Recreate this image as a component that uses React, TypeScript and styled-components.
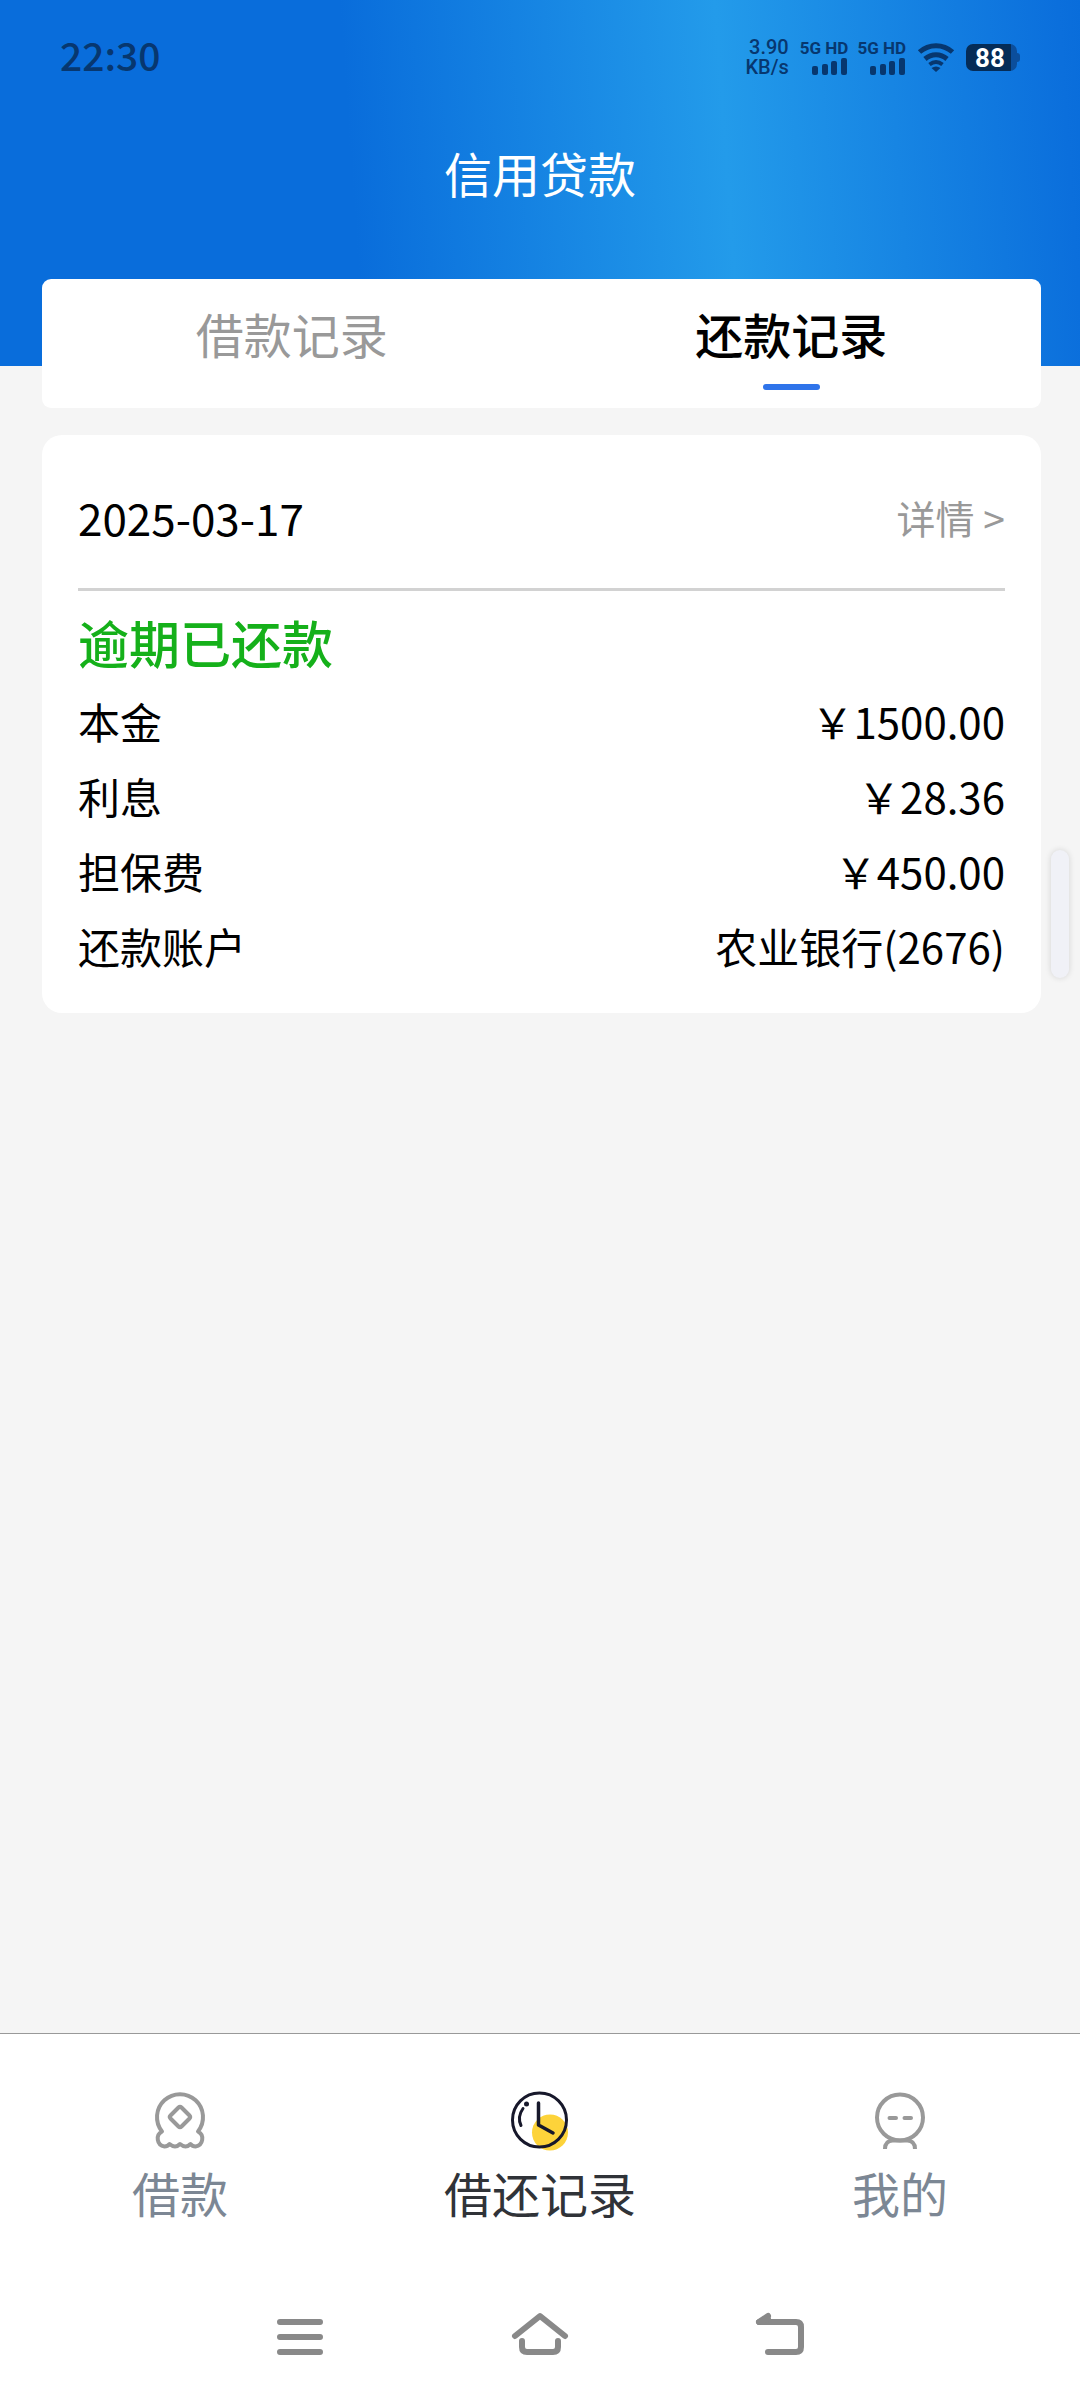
import React, { useState } from "react";
import styled, { createGlobalStyle } from "styled-components";

const GlobalStyle = createGlobalStyle`
  *, *::before, *::after { box-sizing: border-box; }
  body {
    margin: 0;
    background: #f5f5f5;
    color: #000;
    font-family: "Noto Sans CJK SC", "Noto Sans", sans-serif;
  }
  button {
    margin: 0;
    padding: 0;
    border: 0;
    background: none;
    color: inherit;
    font: inherit;
    cursor: pointer;
  }
  svg { display: block; }
`;

const Page = styled.div`
  min-height: 100vh;
  display: flex;
  flex-direction: column;
`;

const Header = styled.header`
  padding-bottom: 136px;
  background: linear-gradient(86deg, #096ddb 0%, #096ddb 33%, #239bea 67%, #0b6fdc 98%, #096ddb 100%);
`;

const StatusBar = styled.div`
  height: 114px;
  padding: 0 60px;
  display: flex;
  align-items: center;
  justify-content: space-between;
  color: #07376f;
`;

const Clock = styled.time`
  padding-bottom: 6px;
  font-size: 39px;
  line-height: 48px;
  font-weight: 500;
`;

const Indicators = styled.div`
  display: flex;
  align-items: center;
  gap: 11px;
  font-family: Roboto, "Noto Sans", sans-serif;
`;

const Speed = styled.div`
  display: flex;
  flex-direction: column;
  align-items: flex-end;
  font-size: 20px;
  line-height: 20px;
  font-weight: 500;
`;

const Network = styled.div`
  display: flex;
  flex-direction: column;
  align-items: flex-end;
  gap: 2px;
  font-size: 17px;
  line-height: 16px;
  font-weight: 700;
`;

const Networks = styled.div`
  display: flex;
  gap: 9px;
`;

const Battery = styled.div`
  display: flex;
  align-items: center;
`;

const BatteryBody = styled.div`
  width: 51px;
  height: 27px;
  padding-right: 3px;
  border-radius: 7px;
  background: linear-gradient(90deg, #052c57 0 45px, #0b4e9c 45px);
  color: #fff;
  font-size: 26px;
  line-height: 28px;
  font-weight: 700;
  text-align: center;
`;

const BatteryTip = styled.div`
  width: 3px;
  height: 9px;
  border-radius: 0 3px 3px 0;
  background: #0b4e9c;
`;

const Title = styled.h1`
  margin: 0;
  color: #fff;
  font-size: 48px;
  line-height: 116px;
  font-weight: 400;
  text-align: center;
`;

const Content = styled.main`
  flex: 1;
  margin-top: -87px;
  padding: 0 39px 0 42px;
  display: flex;
  flex-direction: column;
  gap: 27px;
`;

const Tabs = styled.div`
  display: flex;
  border-radius: 9px;
  background: #fff;
`;

const Tab = styled.button<{ $active: boolean }>`
  flex: 1;
  padding: 22px 0 18px;
  display: flex;
  flex-direction: column;
  align-items: center;
  gap: 19px;
  color: ${(p) => (p.$active ? "#000" : "#999")};
  font-size: 48px;
  line-height: 64px;
  font-weight: ${(p) => (p.$active ? 500 : 400)};

  &::after {
    content: "";
    width: 57px;
    height: 6px;
    border-radius: 3px;
    background: ${(p) => (p.$active ? "#2f74ea" : "transparent")};
  }
`;

const Card = styled.article`
  padding: 0 36px 30px;
  border-radius: 20px;
  background: #fff;
`;

const CardHead = styled.div`
  padding: 34px 0 23px;
  display: flex;
  justify-content: space-between;
  border-bottom: 3px solid #d2d2d2;
  line-height: 96px;
`;

const RecordDate = styled.time`
  font-size: 44px;
`;

const DetailLink = styled.a`
  color: #999;
  font-size: 39px;
  text-decoration: none;
`;

const State = styled.h2`
  margin: 0;
  padding-top: 10px;
  color: #15b01a;
  font-size: 51px;
  line-height: 82px;
  font-weight: 500;
`;

const Details = styled.dl`
  margin: 0;
`;

const Row = styled.div`
  display: flex;
  justify-content: space-between;
  font-size: 42px;
  line-height: 75px;

  dd { margin: 0; }
`;

const BottomNav = styled.nav`
  padding: 57px 0 46px;
  display: flex;
  border-top: 1px solid #999;
  background: #fff;
`;

const NavItem = styled.a<{ $active?: boolean }>`
  flex: 1;
  display: flex;
  flex-direction: column;
  align-items: center;
  gap: 13px;
  color: ${(p) => (p.$active ? "#303338" : "#7c8794")};
  font-size: 48px;
  line-height: 60px;
  text-decoration: none;
`;

const SystemNav = styled.div`
  height: 132px;
  padding: 0 180px;
  display: flex;
  align-items: center;
  background: #fff;
`;

const SystemButton = styled.button`
  flex: 1;
  display: flex;
  justify-content: center;
`;

const EdgeHandle = styled.div`
  position: fixed;
  top: 850px;
  right: 11px;
  width: 18px;
  height: 128px;
  border-radius: 9px;
  background: #f0f1f7;
  box-shadow: 0 0 6px rgba(0, 0, 0, 0.14);
`;

const SignalIcon = () => (
  <svg width="36" height="17" viewBox="0 0 36 17" fill="currentColor" aria-hidden="true">
    <rect x="0" y="8" width="6" height="9" rx="2" />
    <rect x="10" y="6" width="6" height="11" rx="2" />
    <rect x="19" y="3" width="6" height="14" rx="2" />
    <rect x="29" y="0" width="6" height="17" rx="2" />
  </svg>
);

const WifiIcon = () => (
  <svg width="38" height="30" viewBox="0 0 38 30" fill="none" stroke="currentColor" strokeWidth="5" aria-hidden="true">
    <path d="M2.500 10C12 1.500 26 1.500 35.500 10" />
    <path d="M8 17C14.500 11.300 23.500 11.300 30 17" />
    <path d="M12.500 22.500C17 19 21 19 25.500 22.500" strokeWidth="4" />
    <path d="M14.500 26Q19 23 23.500 26L19 30Z" fill="currentColor" stroke="none" />
  </svg>
);

const LoanIcon = () => (
  <svg width="58" height="58" viewBox="0 0 58 58" fill="none" stroke="#999" strokeWidth="4" strokeLinejoin="round" strokeLinecap="round" aria-hidden="true">
    <path d="M11 40.500A23 23 0 1 1 47 40.500A8 8 0 0 1 44.500 55.500Q41.500 55.500 39.500 53Q37 55.500 34.500 55.500T29 53Q26.500 55.500 24 55.500T18.500 53Q16.500 55.500 13.500 55.500A8 8 0 0 1 11 40.500Z" />
    <path d="M27.500 16.500Q29 15 30.500 16.500L38.500 24.500Q40 26 38.500 27.500L30.500 35.500Q29 37 27.500 35.500L19.500 27.500Q18 26 19.500 24.500Z" />
  </svg>
);

const RecordIcon = () => (
  <svg width="58" height="60" viewBox="0 0 58 60" fill="none" stroke="#17182b" strokeLinecap="round" strokeLinejoin="round" aria-hidden="true">
    <circle cx="39" cy="41.500" r="18" fill="#fdd33a" stroke="none" />
    <circle cx="28.500" cy="29" r="27" strokeWidth="3" />
    <path d="M27.500 12V34L42 42" strokeWidth="3.500" />
    <path d="M12 17.500Q6 26 10 34.500" strokeWidth="3" />
    <circle cx="15.500" cy="13" r="2.500" fill="#17182b" stroke="none" />
  </svg>
);

const ProfileIcon = () => (
  <svg width="58" height="58" viewBox="0 0 58 58" fill="none" stroke="#999" strokeWidth="4" aria-hidden="true">
    <circle cx="29" cy="26.500" r="23" />
    <path d="M18.500 27H25M33.500 27H40" strokeLinecap="round" />
    <path d="M14 58Q14 50 21.500 49.500H36.500Q44 50 44 58" />
  </svg>
);

const IconSlot = styled.span`
  height: 58px;
`;

const MenuIcon = () => (
  <svg width="58" height="44" viewBox="0 0 58 44" fill="none" stroke="#898989" strokeWidth="6" strokeLinecap="round" aria-hidden="true">
    <path d="M9 10H49M9 25H49M9 40H49" />
  </svg>
);

const HomeIcon = () => (
  <svg width="58" height="44" viewBox="0 0 58 44" fill="none" stroke="#898989" strokeWidth="6" strokeLinecap="round" strokeLinejoin="round" aria-hidden="true">
    <path d="M4 24L29 4L54 24" />
    <path d="M11 29V35Q11 40 16 40H42Q47 40 47 35V29" />
  </svg>
);

const BackIcon = () => (
  <svg width="58" height="44" viewBox="0 0 58 44" fill="none" stroke="#898989" strokeWidth="6" strokeLinecap="round" strokeLinejoin="round" aria-hidden="true">
    <path d="M17 4L8 10H45Q50 10 50 15V35Q50 40 45 40H17" />
    <path d="M8 10L17 7" />
  </svg>
);

const YUAN = "\uFFE5";

const tabs = ["借款记录", "还款记录"];

const details = [
  { label: "本金", value: `${YUAN}1500.00` },
  { label: "利息", value: `${YUAN}28.36` },
  { label: "担保费", value: `${YUAN}450.00` },
  { label: "还款账户", value: "农业银行(2676)" },
];

const navItems = [
  { label: "借款", Icon: LoanIcon },
  { label: "借还记录", Icon: RecordIcon, active: true },
  { label: "我的", Icon: ProfileIcon },
];

const systemButtons = [
  { label: "菜单", Icon: MenuIcon },
  { label: "主页", Icon: HomeIcon },
  { label: "返回", Icon: BackIcon },
];

export default function App() {
  const [activeTab, setActiveTab] = useState(1);

  return (
    <Page>
      <GlobalStyle />
      <Header>
        <StatusBar>
          <Clock>22:30</Clock>
          <Indicators>
            <Speed>
              <span>3.90</span>
              <span>KB/s</span>
            </Speed>
            <Networks>
              <Network>
                <span>5G HD</span>
                <SignalIcon />
              </Network>
              <Network>
                <span>5G HD</span>
                <SignalIcon />
              </Network>
            </Networks>
            <WifiIcon />
            <Battery>
              <BatteryBody>88</BatteryBody>
              <BatteryTip />
            </Battery>
          </Indicators>
        </StatusBar>
        <Title>信用贷款</Title>
      </Header>

      <Content>
        <Tabs role="tablist">
          {tabs.map((label, i) => (
            <Tab
              key={label}
              role="tab"
              aria-selected={i === activeTab}
              $active={i === activeTab}
              onClick={() => setActiveTab(i)}
            >
              {label}
            </Tab>
          ))}
        </Tabs>

        <Card>
          <CardHead>
            <RecordDate>2025-03-17</RecordDate>
            <DetailLink href="#detail">详情 &gt;</DetailLink>
          </CardHead>
          <State>逾期已还款</State>
          <Details>
            {details.map(({ label, value }) => (
              <Row key={label}>
                <dt>{label}</dt>
                <dd>{value}</dd>
              </Row>
            ))}
          </Details>
        </Card>
      </Content>

      <BottomNav>
        {navItems.map(({ label, Icon, active }) => (
          <NavItem key={label} href="#nav" $active={active} aria-current={active ? "page" : undefined}>
            <IconSlot>
              <Icon />
            </IconSlot>
            {label}
          </NavItem>
        ))}
      </BottomNav>

      <SystemNav>
        {systemButtons.map(({ label, Icon }) => (
          <SystemButton key={label} aria-label={label}>
            <Icon />
          </SystemButton>
        ))}
      </SystemNav>

      <EdgeHandle />
    </Page>
  );
}
